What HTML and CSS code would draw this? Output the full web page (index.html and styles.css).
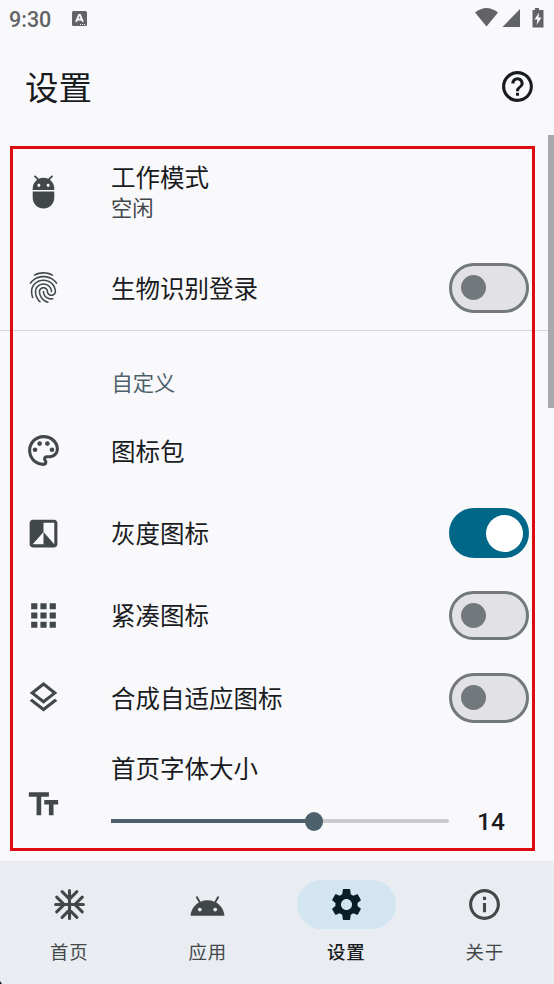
FILE: index.html
```html
<!DOCTYPE html>
<html lang="zh-CN">
<head>
<meta charset="utf-8">
<title>设置</title>
<link rel="stylesheet" href="styles.css">
</head>
<body>
<div class="screen">
  <div class="status">
    <span class="clock">9:30</span>
    <svg class="badge-icon" viewBox="0 0 15 15"><rect width="15" height="15" rx="1.5" fill="#626365"/><path d="M4 10.8 7 4h1l3 6.800M5.300 8.500h4.400" fill="none" stroke="#f9f9fc" stroke-width="1.800"/><path d="M8 13.500h1m1 0h1m1 0h1" stroke="#f9f9fc" stroke-width="1"/></svg>
    <svg class="signals" viewBox="0 0 70 20" fill="#626365"><path d="M0 4.500Q11.500-4.500 23 4.500L11.500 18.500Z"/><path d="M45 1v18H27.500Z"/><path d="M60 0h4v2h4.500v17.500H57.500V2H60Z"/><path d="M64 4.500 59.500 11.500H62.500L61.500 17 66.500 9.500H63.500Z" fill="#f9f9fc"/></svg>
  </div>
  <header class="top">
    <h1>设置</h1>
    <svg class="icon help" viewBox="0 0 24 24"><path d="M11 18h2v-2h-2v2zm1-16C6.480 2 2 6.480 2 12s4.480 10 10 10 10-4.480 10-10S17.520 2 12 2zm0 18c-4.410 0-8-3.590-8-8s3.590-8 8-8 8 3.590 8 8-3.590 8-8 8zm0-14c-2.210 0-4 1.790-4 4h2c0-1.100.9-2 2-2s2 .9 2 2c0 2-3 1.750-3 5h2c0-2.250 3-2.500 3-5 0-2.210-1.790-4-4-4z"/></svg>
  </header>
  <main class="list">
    <div class="row mode">
      <svg class="icon" viewBox="0 0 24 24"><path d="M5 16c0 3.870 3.130 7 7 7s7-3.130 7-7v-4H5v4zM16.120 4.370l2.100-2.100-.82-.83-2.300 2.310C14.160 3.280 13.120 3 12 3s-2.160.28-3.090.75L6.600 1.440l-.82.83 2.100 2.100C6.140 5.640 5 7.680 5 10v1h14v-1c0-2.320-1.140-4.360-2.880-5.630zM9 9c-.55 0-1-.45-1-1s.45-1 1-1 1 .45 1 1-.45 1-1 1zm6 0c-.55 0-1-.45-1-1s.45-1 1-1 1 .45 1 1-.45 1-1 1z"/></svg>
      <div class="text"><div class="label">工作模式</div><div class="sub">空闲</div></div>
    </div>
    <div class="row">
      <svg class="icon" viewBox="0 0 24 24"><path d="M17.81 4.47c-.08 0-.16-.02-.23-.06C15.66 3.42 14 3 12.01 3c-1.98 0-3.86.47-5.57 1.41-.24.13-.54.04-.68-.2-.13-.24-.04-.55.2-.68C7.82 2.52 9.86 2 12.01 2c2.13 0 3.99.47 6.03 1.52.25.13.34.43.21.67-.09.18-.26.28-.44.28zM3.5 9.72c-.1 0-.2-.03-.29-.09-.23-.16-.28-.47-.12-.7.99-1.4 2.25-2.5 3.75-3.27C9.98 4.04 14 4.03 17.15 5.65c1.5.77 2.76 1.86 3.75 3.25.16.22.11.54-.12.7-.23.16-.54.11-.7-.12-.9-1.26-2.04-2.25-3.39-2.94-2.87-1.47-6.54-1.47-9.4.01-1.36.7-2.5 1.7-3.4 2.96-.08.14-.23.21-.39.21zm6.25 12.07c-.13 0-.26-.05-.35-.15-.87-.87-1.34-1.43-2.01-2.64-.69-1.23-1.05-2.73-1.05-4.34 0-2.97 2.54-5.39 5.66-5.39s5.66 2.42 5.66 5.39c0 .28-.22.5-.5.5s-.5-.22-.5-.5c0-2.42-2.09-4.39-4.66-4.39-2.57 0-4.66 1.97-4.66 4.39 0 1.44.32 2.77.93 3.85.64 1.15 1.08 1.64 1.85 2.42.19.2.19.51 0 .71-.11.1-.24.15-.37.15zm7.17-1.85c-1.19 0-2.24-.3-3.1-.89-1.49-1.01-2.38-2.65-2.38-4.39 0-.28.22-.5.5-.5s.5.22.5.5c0 1.41.72 2.74 1.94 3.56.71.48 1.54.71 2.54.71.24 0 .64-.03 1.04-.1.27-.05.53.13.58.41.05.27-.13.53-.41.58-.57.11-1.07.12-1.21.12zM14.91 22c-.04 0-.09-.01-.13-.02-1.59-.44-2.63-1.03-3.72-2.1-1.4-1.39-2.17-3.24-2.17-5.22 0-1.62 1.38-2.94 3.08-2.94 1.7 0 3.08 1.32 3.08 2.94 0 1.07.93 1.94 2.08 1.94s2.08-.87 2.08-1.94c0-3.77-3.25-6.83-7.25-6.83-2.84 0-5.44 1.58-6.61 4.03-.39.81-.59 1.76-.59 2.8 0 .78.07 2.01.67 3.61.1.26-.03.55-.29.64-.26.1-.55-.04-.64-.29-.49-1.31-.73-2.61-.73-3.96 0-1.2.23-2.29.68-3.24 1.33-2.79 4.28-4.6 7.51-4.6 4.55 0 8.25 3.51 8.25 7.83 0 1.62-1.38 2.94-3.08 2.94s-3.08-1.32-3.08-2.94c0-1.07-.93-1.94-2.08-1.94s-2.08.87-2.08 1.94c0 1.71.66 3.31 1.87 4.51.95.94 1.86 1.46 3.27 1.85.27.07.42.35.35.61-.05.23-.26.38-.47.38z"/></svg>
      <div class="label">生物识别登录</div>
      <div class="switch"><i></i></div>
    </div>
    <div class="divider"></div>
    <div class="section">自定义</div>
    <div class="row">
      <svg class="icon" viewBox="0 0 24 24"><path d="M12 22C6.490 22 2 17.510 2 12S6.490 2 12 2s10 4.040 10 9c0 3.310-2.690 6-6 6h-1.770c-.28 0-.5.22-.5.5 0 .12.05.23.13.33.41.47.64 1.060.64 1.670A2.500 2.500 0 0 1 12 22zm0-18c-4.410 0-8 3.590-8 8s3.590 8 8 8c.28 0 .5-.22.5-.5a.54.54 0 0 0-.14-.35c-.41-.46-.63-1.050-.63-1.650a2.500 2.500 0 0 1 2.500-2.500H16c2.210 0 4-1.790 4-4 0-3.860-3.590-7-8-7z"/><circle cx="6.500" cy="11.500" r="1.500"/><circle cx="9.500" cy="7.500" r="1.500"/><circle cx="14.500" cy="7.500" r="1.500"/><circle cx="17.500" cy="11.500" r="1.500"/></svg>
      <div class="label">图标包</div>
    </div>
    <div class="row">
      <svg class="icon" viewBox="0 0 24 24"><path d="M19 3H5c-1.100 0-2 .9-2 2v14c0 1.100.9 2 2 2h14c1.100 0 2-.9 2-2V5c0-1.100-.9-2-2-2zm0 16l-7-8v8H5l7-8V5h7v14z"/></svg>
      <div class="label">灰度图标</div>
      <div class="switch on"><i></i></div>
    </div>
    <div class="row">
      <svg class="icon" viewBox="0 0 24 24"><path d="M4 8h4V4H4v4zm6 12h4v-4h-4v4zm-6 0h4v-4H4v4zm0-6h4v-4H4v4zm6 0h4v-4h-4v4zm6-10v4h4V4h-4zm-6 4h4V4h-4v4zm6 6h4v-4h-4v4zm0 6h4v-4h-4v4z"/></svg>
      <div class="label">紧凑图标</div>
      <div class="switch"><i></i></div>
    </div>
    <div class="row">
      <svg class="icon" viewBox="0 0 24 24"><path d="M11.990 18.540l-7.370-5.730L3 14.070l9 7 9-7-1.630-1.270-7.380 5.740zM12 16l7.360-5.730L21 9l-9-7-9 7 1.630 1.270L12 16zm0-11.470L17.740 9 12 13.470 6.260 9 12 4.530z"/></svg>
      <div class="label">合成自适应图标</div>
      <div class="switch"><i></i></div>
    </div>
    <div class="row size">
      <svg class="icon" viewBox="0 0 24 24"><path d="M2.500 4v3h5v12h3V7h5V4h-13zm19 5h-9v3h3v7h3v-7h3V9z"/></svg>
      <div class="text">
        <div class="label">首页字体大小</div>
        <div class="slider"><div class="track"><div class="fill"></div><div class="thumb"></div></div><span class="value">14</span></div>
      </div>
    </div>
  </main>
  <nav class="nav">
    <div class="tab"><div class="pill"><svg class="icon" viewBox="0 0 24 24"><path class="line" d="M12 3v18M3 12h18M7.200 3.700 12 8.500l4.800-4.800M7.200 20.300 12 15.500l4.800 4.800M3.700 7.200 8.500 12l-4.800 4.800M20.300 7.200 15.500 12l4.800 4.800"/></svg></div><span>首页</span></div>
    <div class="tab"><div class="pill droid"><svg class="icon" viewBox="0 0 24 24"><path d="M17.600 9.480l1.840-3.180c.16-.31.04-.69-.26-.85-.29-.15-.65-.06-.83.22l-1.880 3.240c-2.860-1.210-6.080-1.210-8.940 0L5.650 5.670c-.19-.29-.58-.38-.87-.2-.28.18-.37.54-.22.83L6.400 9.480C3.300 11.250 1.280 14.440 1 18h22c-.28-3.560-2.300-6.750-5.400-8.520zM7 15.250c-.69 0-1.250-.56-1.250-1.250s.56-1.250 1.250-1.250 1.250.56 1.250 1.250-.56 1.250-1.250 1.250zm10 0c-.69 0-1.250-.56-1.250-1.250s.56-1.250 1.250-1.250 1.250.56 1.250 1.250-.56 1.250-1.250 1.250z"/></svg></div><span>应用</span></div>
    <div class="tab active"><div class="pill"><svg class="icon" viewBox="0 0 24 24"><path d="M19.140 12.940c.04-.3.06-.61.06-.94 0-.32-.02-.64-.07-.94l2.030-1.580c.18-.14.23-.41.12-.61l-1.920-3.320c-.12-.22-.37-.29-.59-.22l-2.390.96c-.5-.38-1.030-.7-1.620-.94l-.36-2.940c-.04-.24-.24-.41-.48-.41h-3.840c-.24 0-.43.17-.47.41l-.36 2.940c-.59.24-1.130.57-1.620.94l-2.390-.96c-.22-.08-.47 0-.59.22L2.740 8.870c-.12.21-.08.47.12.61l2.030 1.580c-.05.3-.09.63-.09.94s.02.64.07.94l-2.030 1.580c-.18.14-.23.41-.12.61l1.920 3.320c.12.22.37.29.59.22l2.390-.96c.5.38 1.030.7 1.620.94l.36 2.940c.05.24.24.41.48.41h3.840c.24 0 .44-.17.47-.41l.36-2.940c.59-.24 1.130-.56 1.620-.94l2.390.96c.22.08.47 0 .59-.22l1.920-3.320c.12-.22.07-.47-.12-.61l-2.010-1.580zM12 15.600c-1.980 0-3.600-1.620-3.600-3.600s1.620-3.600 3.600-3.600 3.600 1.620 3.600 3.600-1.620 3.600-3.600 3.600z"/></svg></div><span>设置</span></div>
    <div class="tab"><div class="pill"><svg class="icon" viewBox="0 0 24 24"><path d="M11 7h2v2h-2zm0 4h2v6h-2zm1-9C6.480 2 2 6.480 2 12s4.480 10 10 10 10-4.480 10-10S17.520 2 12 2zm0 18c-4.410 0-8-3.590-8-8s3.590-8 8-8 8 3.590 8 8-3.590 8-8 8z"/></svg></div><span>关于</span></div>
  </nav>
  <div class="highlight"></div>
  <div class="scrollbar"></div>
  <div class="corner"></div>
</div>
</body>
</html>
```
FILE: styles.css
```css
* { box-sizing: border-box; }
body { margin: 0; background: #f9f9fc; color: #191c1e; font-family: Roboto, "Noto Sans CJK SC", sans-serif; }
.screen { position: relative; width: 554px; height: 984px; overflow: hidden; display: flex; flex-direction: column; }
.status { display: flex; align-items: center; height: 38px; padding: 0 9px 0 9px; color: #626365; }
.clock { font-size: 21.5px; font-weight: 500; line-height: 38px; padding-top: 2px; width: 63px; }
.badge-icon { width: 15px; height: 15px; margin-bottom: 1px; }
.signals { width: 70px; height: 20px; margin-left: auto; margin-bottom: 2px; }
.top { display: flex; align-items: center; justify-content: space-between; height: 97px; padding: 0 18.5px 0 25px; }
h1 { margin: 0; padding-top: 4px; font-size: 33.5px; font-weight: 400; line-height: 50px; }
.icon { display: block; flex: none; width: 37px; height: 37px; fill: #42474a; }
.help { fill: #191c1e; }
.list { flex: 1; display: flex; flex-direction: column; padding-top: 1px; }
.row { display: flex; align-items: center; height: 82.4px; padding: 0 25px 0 24.5px; flex: none; }
.row .icon { margin-right: 49.5px; }
.mode { height: 110.6px; }
.label { padding-top: 4px; font-size: 24.5px; line-height: 36px; white-space: nowrap; }
.mode .label { padding-top: 1px; }
.sub { font-size: 21.3px; line-height: 27px; margin-top: -2px; color: #42474a; }
.switch { display: flex; align-items: center; width: 80.5px; height: 49.5px; margin-left: auto; border: 3px solid #72787b; border-radius: 25px; background: #e2e2e5; padding-left: 9.5px; }
.switch i { width: 25px; height: 25px; border-radius: 50%; background: #72787b; }
.switch.on { border-color: #006788; background: #006788; padding-left: 34px; }
.switch.on i { width: 37px; height: 37px; background: #fff; }
.divider { height: 1px; flex: none; margin-top: 1px; background: #d5d6d9; }
.section { height: 78.5px; flex: none; padding: 38px 0 0 111.5px; font-size: 21.3px; line-height: 30px; color: #4d616c; }
.size { height: 118px; align-items: flex-start; padding-top: 9px; }
.size .icon { margin-top: 38px; }
.slider { display: flex; align-items: center; height: 36px; margin-top: 15px; }
.track { position: relative; width: 338px; height: 4px; border-radius: 2px; background: #c9cacd; }
.fill { width: 203px; height: 4px; background: #4d616c; }
.thumb { position: absolute; left: 193.5px; top: -7px; width: 18.5px; height: 18.5px; border-radius: 50%; background: #4d616c; }
.value { width: 84px; padding-top: 2px; text-align: center; font-size: 24.5px; font-weight: 500; line-height: 36px; }
.nav { display: flex; height: 123px; flex: none; background: #e9edf2; padding-top: 18.5px; }
.tab { flex: 1; display: flex; flex-direction: column; align-items: center; color: #42474a; font-size: 18.4px; line-height: 28px; letter-spacing: .8px; }
.pill { display: flex; align-items: center; justify-content: center; width: 98.5px; height: 49.5px; border-radius: 25px; margin-bottom: 9.8px; }
.droid { padding-top: 5px; }
.line { fill: none; stroke: #42474a; stroke-width: 2; stroke-linecap: round; }
.active { color: #191c1e; font-weight: 500; }
.active .pill { background: #d2e5f0; }
.active .icon { fill: #081e27; }
.highlight { position: absolute; left: 10px; top: 146px; width: 525px; height: 705px; border: 3px solid #df0a0d; }
.scrollbar { position: absolute; right: 0; top: 135px; width: 6px; height: 273px; background: #a7a9ac; }
.corner { position: absolute; left: 0; bottom: 0; width: 2px; height: 3px; background: #0b2430; clip-path: polygon(0 0, 100% 100%, 0 100%); }
```
